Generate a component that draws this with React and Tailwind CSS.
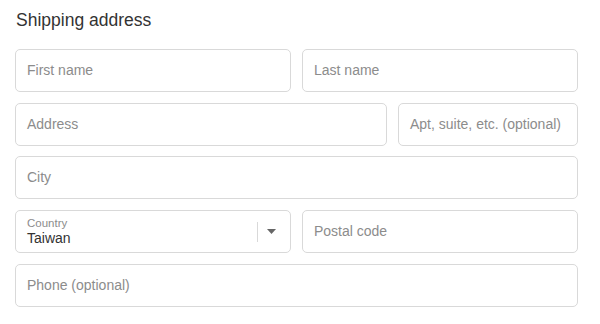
import React from "react";

const font = { fontFamily: '"Liberation Sans", Arial, sans-serif' };

function Field({ label, className = "" }) {
  return (
    <div
      className={`h-[43px] rounded-[5px] border border-[#d9d9d9] bg-white flex items-center px-[11px] text-[14px] text-[#8c8c8c] ${className}`}
    >
      {label}
    </div>
  );
}

export default function App() {
  return (
    <div className="w-[600px] h-[324px] bg-white" style={font}>
      <div className="pl-[16px] pt-[9px] text-[17.5px] leading-[22px] text-[#333333]">
        Shipping address
      </div>
      <div className="mt-[18px] ml-[15px] w-[563px] flex flex-col">
        <div className="flex gap-[11px]">
          <Field label="First name" className="w-[276px]" />
          <Field label="Last name" className="w-[276px]" />
        </div>
        <div className="flex gap-[11px] mt-[11px]">
          <Field label="Address" className="w-[372px]" />
          <Field label="Apt, suite, etc. (optional)" className="w-[180px]" />
        </div>
        <Field label="City" className="mt-[10px]" />
        <div className="flex gap-[11px] mt-[11px]">
          <div className="w-[276px] h-[43px] rounded-[5px] border border-[#d9d9d9] bg-white flex items-center pl-[11px] pr-[14px]">
            <div className="flex-1 flex flex-col">
              <span className="text-[11.5px] leading-[13px] text-[#8c8c8c]">Country</span>
              <span className="text-[14px] leading-[17px] text-[#333333]">Taiwan</span>
            </div>
            <div className="w-px h-[20px] bg-[#d9d9d9]" />
            <div className="ml-[9px] flex items-center">
              <svg width="9" height="5" viewBox="0 0 9 5">
                <path d="M0 0 L9 0 L4.5 5 Z" fill="#666666" />
              </svg>
            </div>
          </div>
          <Field label="Postal code" className="w-[276px]" />
        </div>
        <Field label="Phone (optional)" className="mt-[11px]" />
      </div>
    </div>
  );
}
